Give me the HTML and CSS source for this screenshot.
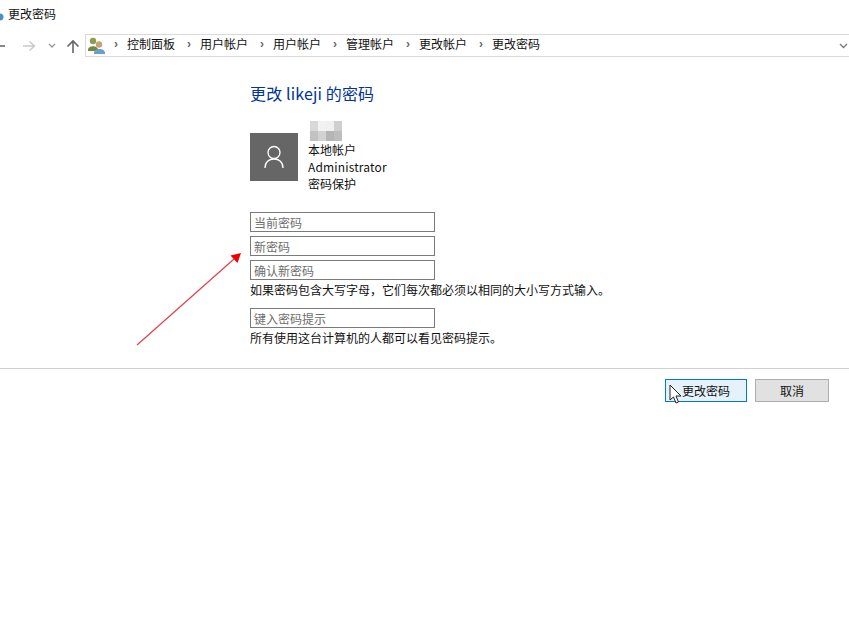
FILE: index.html
```html
<!DOCTYPE html>
<html lang="zh-CN">
<head>
<meta charset="utf-8">
<title>更改密码</title>
<link rel="stylesheet" href="styles.css">
</head>
<body>
<div class="titlebar">
  <svg class="title-icon" width="5" height="10" viewBox="0 0 5 10"><circle cx="0" cy="6" r="3.5" fill="#4a90c4"/></svg>
  <span>更改密码</span>
</div>
<div class="navbar">
  <div class="nav-buttons">
    <svg class="nav-back" width="6" height="10" viewBox="0 0 6 10"><path d="M0 5H5" stroke="#555" stroke-width="1.4" fill="none"/></svg>
    <svg class="nav-fwd" width="14" height="12" viewBox="0 0 14 12"><path d="M1 6H12M7.5 1.5L12.5 6L7.5 10.5" stroke="#c9c9c9" stroke-width="1.4" fill="none"/></svg>
    <svg class="nav-down" width="8" height="6" viewBox="0 0 8 6"><path d="M1 1L4 4L7 1" stroke="#999" stroke-width="1.4" fill="none"/></svg>
    <svg class="nav-up" width="14" height="14" viewBox="0 0 14 14"><path d="M7 14V2M1.5 7.5L7 2L12.5 7.5" stroke="#666" stroke-width="1.6" fill="none"/></svg>
  </div>
  <div class="address">
    <svg class="addr-icon" width="17" height="17" viewBox="0 0 17 17">
      <circle cx="5" cy="4" r="3.2" fill="#8f9a55"/>
      <path d="M0 13C0 8 10 8 10 13V14H0Z" fill="#6f8a45"/>
      <circle cx="11" cy="7.500" r="3.200" fill="#c9a274"/>
      <path d="M6 16C6 10.500 17 10.500 17 16V17H6Z" fill="#6c9fc7"/>
    </svg>
    <span class="sep">›</span><span class="crumb">控制面板</span>
    <span class="sep">›</span><span class="crumb">用户帐户</span>
    <span class="sep">›</span><span class="crumb">用户帐户</span>
    <span class="sep">›</span><span class="crumb">管理帐户</span>
    <span class="sep">›</span><span class="crumb">更改帐户</span>
    <span class="sep">›</span><span class="crumb">更改密码</span>
    <svg class="addr-chevron" width="9" height="6" viewBox="0 0 9 6"><path d="M1 1L4.500 4.500L8 1" stroke="#777" stroke-width="1.3" fill="none"/></svg>
  </div>
</div>
<main class="content">
  <h1 class="heading">更改 likeji 的密码</h1>
  <div class="account">
    <div class="avatar">
      <svg width="20" height="24" viewBox="0 0 20 24"><circle cx="10" cy="7.500" r="6" fill="none" stroke="#fff" stroke-width="1.300"/><path d="M1 23C1 17 5 14 10 14C15 14 19 17 19 23" fill="none" stroke="#fff" stroke-width="1.300"/></svg>
    </div>
    <div class="account-info">
      <div class="blur-name">
        <i class="px p1"></i><i class="px p2"></i><i class="px p3"></i><i class="px p4"></i>
        <i class="px p5"></i><i class="px p6"></i><i class="px p7"></i><i class="px p8"></i>
      </div>
      <div class="info-line">本地帐户</div>
      <div class="info-line info-latin">Administrator</div>
      <div class="info-line">密码保护</div>
    </div>
  </div>
  <div class="fields">
    <input class="field" placeholder="当前密码">
    <input class="field" placeholder="新密码">
    <input class="field" placeholder="确认新密码">
  </div>
  <p class="hint">如果密码包含大写字母，它们每次都必须以相同的大小写方式输入。</p>
  <input class="field hint-field" placeholder="键入密码提示">
  <p class="hint">所有使用这台计算机的人都可以看见密码提示。</p>
</main>
<footer class="actions">
  <button class="btn btn-primary">更改密码</button>
  <button class="btn">取消</button>
</footer>
<svg class="arrow" width="110" height="100" viewBox="0 0 110 100">
  <path d="M1 99L98 13" stroke="#e2404a" stroke-width="1.200" fill="none"/>
  <path d="M105 7L94.500 9.500L101.500 17Z" fill="#ee0000"/>
</svg>
<svg class="cursor" width="14" height="20" viewBox="0 0 14 20"><path d="M1 1V16L4.500 13L7 19L9.500 18L7 12H12Z" fill="#fff" stroke="#222" stroke-width="1"/></svg>
</body>
</html>
```
FILE: styles.css
```css
* { box-sizing: border-box; }
html, body { margin: 0; padding: 0; }
body {
  position: relative;
  width: 849px;
  height: 637px;
  overflow: hidden;
  background: #fff;
  color: #111;
  font: 12px/16px "Noto Sans CJK SC", "Liberation Sans", sans-serif;
}
.titlebar {
  height: 28px;
  display: flex;
  align-items: center;
  gap: 3px;
}
.title-icon { margin-top: 3px; }
.navbar {
  height: 23px;
  margin-top: 6px;
  display: flex;
  align-items: center;
}
.nav-buttons {
  width: 85px;
  height: 22px;
  flex: none;
  display: flex;
  align-items: center;
}
.nav-back { margin-right: 16px; }
.nav-fwd { margin-right: 12px; }
.nav-down { margin-right: 10px; }
.address {
  flex: 1;
  height: 23px;
  display: flex;
  align-items: center;
  margin-right: -4px;
  padding: 0 0 3px 2px;
  border: 1px solid #d9d9d9;
  white-space: nowrap;
}
.addr-icon { flex: none; margin: 2px 7px 0 0; }
.sep {
  width: 15px;
  flex: none;
  color: #666;
  font: 700 12px/16px "Liberation Sans", sans-serif;
  padding-left: 2px;
}
.crumb { width: 58px; flex: none; }
.addr-chevron { margin-left: auto; margin-right: 4px; margin-top: 4px; }
.content {
  margin-left: 250px;
  width: 400px;
  height: 311px;
  padding-top: 25px;
}
.heading {
  margin: 0;
  color: #003399;
  font-size: 16px;
  font-weight: 400;
  line-height: 22px;
  letter-spacing: 0.15px;
}
.account {
  display: flex;
  align-items: flex-start;
  gap: 10px;
  height: 73px;
  margin-top: 11px;
}
.avatar {
  width: 48px;
  height: 48px;
  margin-top: 18px;
  background: #666;
  display: flex;
  align-items: center;
  justify-content: center;
}
.account-info { margin-top: 6px; }
.blur-name {
  width: 32px;
  height: 20px;
  margin-left: 2px;
  display: grid;
  grid-template-columns: repeat(4, 8px);
  grid-template-rows: repeat(2, 10px);
}
.px { display: block; }
.p1 { background: #d8d8d8; }
.p2 { background: #f2f2f2; }
.p3 { background: #f0f0f0; }
.p4 { background: #cfcfcf; }
.p5 { background: #c2c2c2; }
.p6 { background: #d2d2d2; }
.p7 { background: #b5b5b5; }
.p8 { background: #bdbdbd; }
.info-line { height: 17px; line-height: 17px; font-size: 12px; }
.info-latin { letter-spacing: 0.15px; }
.fields {
  margin-top: 24px;
  display: flex;
  flex-direction: column;
  gap: 4px;
}
.field {
  display: block;
  width: 185px;
  height: 20px;
  padding: 0 3px;
  border: 1px solid #7a7a7a;
  background: #fff;
  border-radius: 0;
  outline: none;
  font: 12px "Noto Sans CJK SC", sans-serif;
}
.field::placeholder { color: #6d6d6d; opacity: 1; }
.hint {
  margin: 2px 0 0;
  line-height: 16px;
  width: 420px;
  font-size: 12px;
}
.hint-field { margin-top: 10px; }
.actions {
  border-top: 1px solid #d0d0d0;
  display: flex;
  justify-content: flex-end;
  gap: 8px;
  padding: 10px 20px 0 0;
}
.btn {
  width: 74px;
  height: 23px;
  padding: 0;
  background: #e1e1e1;
  border: 1px solid #adadad;
  color: #111;
  font: 12px "Noto Sans CJK SC", sans-serif;
}
.btn-primary {
  width: 82px;
  background: #e5f1fb;
  border: 1px solid #0078d7;
}
.arrow { position: absolute; left: 136px; top: 246px; }
.cursor { position: absolute; left: 669px; top: 384px; }
```
